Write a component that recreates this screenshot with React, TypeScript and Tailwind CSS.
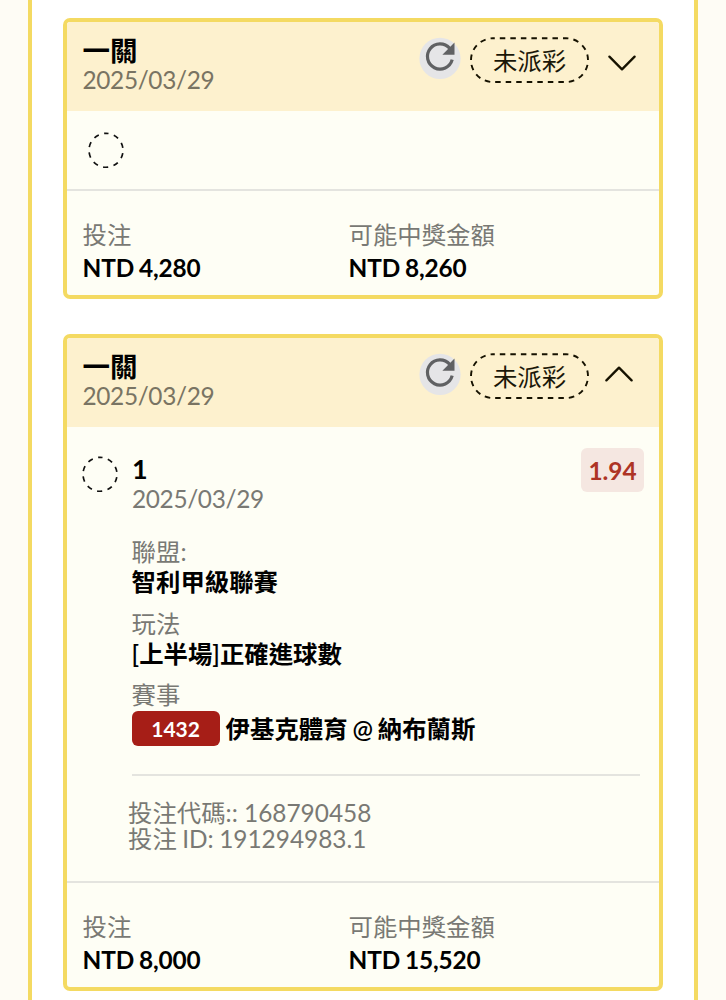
import React, { useState } from "react";

interface Selection {
    index: number;
    date: string;
    odds: string;
    league: string;
    play: string;
    matchNo: string;
    match: string;
    code: string;
    id: string;
}

interface Bet {
    title: string;
    date: string;
    status: string;
    stake: string;
    payout: string;
    open: boolean;
    selection?: Selection;
}

const bets: Bet[] = [
    {
        title: "一關",
        date: "2025/03/29",
        status: "未派彩",
        stake: "NTD 4,280",
        payout: "NTD 8,260",
        open: false,
    },
    {
        title: "一關",
        date: "2025/03/29",
        status: "未派彩",
        stake: "NTD 8,000",
        payout: "NTD 15,520",
        open: true,
        selection: {
            index: 1,
            date: "2025/03/29",
            odds: "1.94",
            league: "智利甲級聯賽",
            play: "[上半場]正確進球數",
            matchNo: "1432",
            match: "伊基克體育 @ 納布蘭斯",
            code: "168790458",
            id: "191294983.1",
        },
    },
];

const PendingCircle = () => (
    <svg width="36" height="36" viewBox="0 0 36 36" fill="none" className="shrink-0">
        <circle cx="17.7" cy="18" r="17" stroke="#111" strokeWidth="1.7" strokeDasharray="5.2 5.48" strokeDashoffset="2.6" transform="rotate(-90 18 18)" />
    </svg>
);

const RefreshIcon = () => (
    <svg width="42" height="42" viewBox="0 0 42 42" fill="none">
        <circle cx="21" cy="21.4" r="20.6" fill="#e5e5e7" />
        <path d="M33.2 22.7A12.6 12.6 0 1 1 30.65 11.3" stroke="#606163" strokeWidth="3.2" />
        <path d="M35.5 5.4V17.7H23.4Z" fill="#606163" />
    </svg>
);

const StatusPill = ({ label }: { label: string }) => (
    <div className="relative h-[46px] w-[119px]">
        <svg width="119" height="46" viewBox="0 0 119 46" fill="none" className="absolute inset-0">
            <rect x="1" y="1.3" width="117" height="43.7" rx="21.8" stroke="#161200" strokeWidth="1.9" strokeDasharray="5.5 5.03" strokeDashoffset="-7" />
        </svg>
        <div className="text-center leading-[48px] text-[#1a1708]">{label}</div>
    </div>
);

const Chevron = ({ up }: { up: boolean }) => (
    <svg width="28" height="16" viewBox="0 0 28 16" fill="none" stroke="#161200" strokeWidth="2.3" strokeLinecap="round" strokeLinejoin="round">
        <path d={up ? "M1.4 14.4L14 1.6L26.6 14.4" : "M1.4 1.6L14 14.4L26.6 1.6"} />
    </svg>
);

const BetCard = ({ bet }: { bet: Bet }) => {
    const [open, setOpen] = useState(bet.open);
    const item = bet.selection;

    return (
        <div className="overflow-hidden rounded-[7px] border-4 border-[#f4da62] bg-[#fefef5]">
            <div className="flex h-[89px] items-start justify-between bg-[#fdf1ce] pl-[15.5px]">
                <div className="pt-3.5">
                    <div className="text-[27.5px] leading-[30px] font-bold">{bet.title}</div>
                    <div className="leading-[28px] tracking-[-0.35px] text-[#797463]">{bet.date}</div>
                </div>
                <div className="flex pt-[15px]">
                    <RefreshIcon />
                    <div className="ml-[9px]">
                        <StatusPill label={bet.status} />
                    </div>
                    <button
                        type="button"
                        onClick={() => setOpen(!open)}
                        className={open ? "mt-[12.5px] mr-[26px] ml-4 self-start" : "mt-[18px] mr-[23px] ml-[19px] self-start"}
                    >
                        <Chevron up={open} />
                    </button>
                </div>
            </div>

            {open && item ? (
                <div className="flex h-[456px] border-b-2 border-[#e4e4df] pl-[15px]">
                    <div className="pt-[29px]">
                        <PendingCircle />
                    </div>
                    <div className="ml-3.5 flex-1 pt-[21px] pr-[15px]">
                        <div className="flex items-start justify-between">
                            <div>
                                <div className="text-[27px] leading-[42px] font-bold">{item.index}</div>
                                <div className="-mt-[5px] leading-[28px] tracking-[-0.35px] text-[#797974]">{item.date}</div>
                            </div>
                            <div className="h-11 w-[63px] rounded-md bg-[#f5e7e1] text-center leading-[45px] font-bold text-[#ae3425]">
                                {item.odds}
                            </div>
                        </div>
                        <div className="mt-6 -ml-[0.4px] leading-[30px]">
                            <div className="text-[#797974]">聯盟:</div>
                            <div className="font-semibold">{item.league}</div>
                        </div>
                        <div className="mt-[11.5px] -ml-[0.4px] leading-[30px]">
                            <div className="text-[#797974]">玩法</div>
                            <div className="font-semibold">{item.play}</div>
                        </div>
                        <div className="mt-[11.5px] -ml-[0.4px] leading-[30px]">
                            <div className="text-[#797974]">賽事</div>
                            <div className="mt-px flex items-center font-semibold">
                                <span className="h-[35px] w-[88px] rounded-md bg-[#a61e17] text-center text-[21px] leading-[36px] font-bold text-white">
                                    {item.matchNo}
                                </span>
                                <span className="ml-1.5 leading-[32px] [word-spacing:-1.2px]">{item.match}</span>
                            </div>
                        </div>
                        <div className="mt-7 mr-1 border-t-2 border-[#e4e4df]" />
                        <div className="mt-6 -ml-1 leading-[26px] text-[#797974]">
                            <div>投注代碼:: {item.code}</div>
                            <div className="[word-spacing:-0.8px]">投注 ID: {item.id}</div>
                        </div>
                    </div>
                </div>
            ) : (
                <div className="h-20 border-b-2 border-[#e4e4df] pt-[21px] pl-[21px]">
                    <PendingCircle />
                </div>
            )}

            <div className="flex h-[104px] pt-[27px] pl-[15.5px] leading-[33px]">
                <div className="w-[266px]">
                    <div className="text-[#797974]">投注</div>
                    <div className="font-bold tracking-[-0.13px] [word-spacing:-1px]">{bet.stake}</div>
                </div>
                <div>
                    <div className="text-[#797974]">可能中獎金額</div>
                    <div className="font-bold tracking-[-0.13px] [word-spacing:-1px]">{bet.payout}</div>
                </div>
            </div>
        </div>
    );
};

export default function App() {
    return (
        <div className="h-[1000px] overflow-hidden bg-[#fefcf5] pr-7 pl-7 font-['Lato','Noto_Sans_CJK_TC',sans-serif] text-[24.4px] text-black">
            <div className="flex h-full flex-col gap-[35px] border-x-4 border-[#f4da62] bg-white px-[31px] pt-[18px]">
                {bets.map((bet, i) => (
                    <div key={i} className="shrink-0">
                        <BetCard bet={bet} />
                    </div>
                ))}
            </div>
        </div>
    );
}
